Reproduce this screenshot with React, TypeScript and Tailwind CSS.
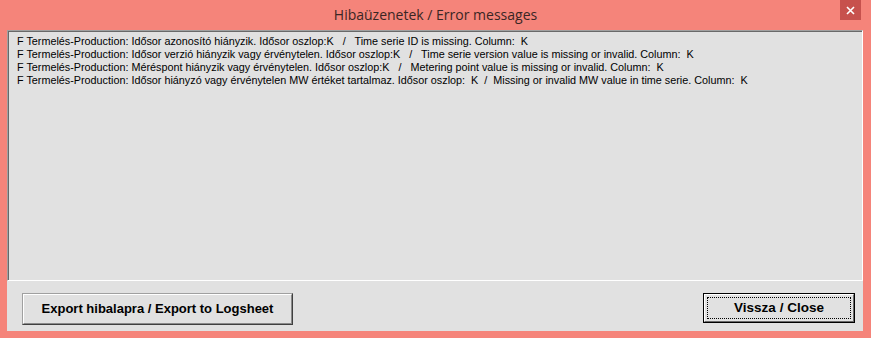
import React from "react";

const lines = [
  "F Termelés-Production: Idősor azonosító hiányzik. Idősor oszlop:K   /   Time serie ID is missing. Column:  K",
  "F Termelés-Production: Idősor verzió hiányzik vagy érvénytelen. Idősor oszlop:K   /   Time serie version value is missing or invalid. Column:  K",
  "F Termelés-Production: Méréspont hiányzik vagy érvénytelen. Idősor oszlop:K   /   Metering point value is missing or invalid. Column:  K",
  "F Termelés-Production: Idősor hiányzó vagy érvénytelen MW értéket tartalmaz. Idősor oszlop:  K  /  Missing or invalid MW value in time serie. Column:  K",
];

export default function App() {
  return (
    <div className="w-[871px] h-[338px] bg-[#f5847a] flex flex-col overflow-hidden">
      <div className="h-[30px] flex items-start relative shrink-0">
        <div className="flex-1 text-center pt-[5px] text-[14px] text-[#3a2624] leading-[20px]" style={{ fontFamily: '"Open Sans", "Noto Sans", sans-serif' }}>
          Hibaüzenetek / Error messages
        </div>
        <div className="absolute right-[10px] top-0 w-[21px] h-[20px] bg-[#c7514d] flex items-center justify-center">
          <svg width="9" height="9" viewBox="0 0 9 9">
            <path d="M1 1 L8 8 M8 1 L1 8" stroke="#ffffff" strokeWidth="1.6" />
          </svg>
        </div>
      </div>
      <div className="flex-1 ml-[7px] mr-[8px] mb-[7px] bg-[#e1e1e1] flex flex-col">
        <div className="h-[251px] border-t border-l border-[#a0a0a0] border-b border-r border-b-white border-r-white shrink-0">
          <div className="h-full border-t border-l border-[#696969] pl-[8px] pt-[3px]" style={{ fontFamily: '"Liberation Sans", Arial, sans-serif' }}>
            {lines.map((l, i) => (
              <div key={i} className="text-[10.8px] leading-[13px] text-black whitespace-pre">
                {l}
              </div>
            ))}
          </div>
        </div>
        <div className="flex-1 flex items-start justify-between pt-[12px] pl-[15px] pr-[8px]" style={{ fontFamily: '"Liberation Sans", Arial, sans-serif' }}>
          <div className="w-[271px] h-[32px] border border-[#a0a0a0] border-b-[#404040] border-r-[#404040]">
            <div className="h-full border-t border-l border-white border-b border-r border-b-[#8a8a8a] border-r-[#8a8a8a] flex items-center justify-center text-[13px] font-bold text-black whitespace-nowrap">
              Export hibalapra / Export to Logsheet
            </div>
          </div>
          <div className="w-[152px] h-[30px] border border-black">
            <div className="h-full border-t border-l border-white border-b border-r border-b-[#696969] border-r-[#696969] p-[2px]">
              <div className="h-full border border-dotted border-black flex items-center justify-center text-[13.5px] font-bold text-black whitespace-nowrap">
                Vissza / Close
              </div>
            </div>
          </div>
        </div>
      </div>
    </div>
  );
}
